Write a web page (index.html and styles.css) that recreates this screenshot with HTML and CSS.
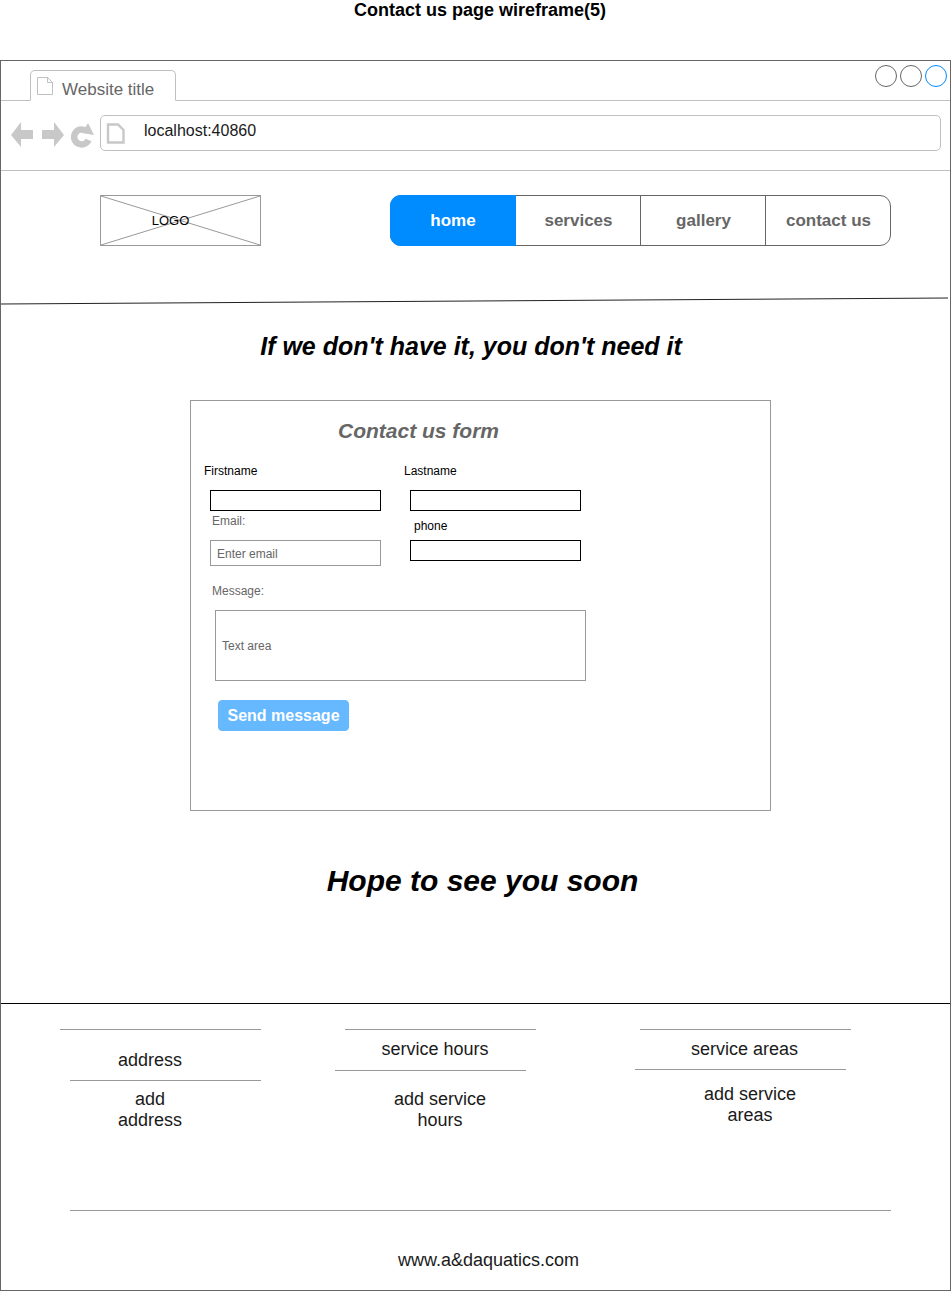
FILE: index.html
```html
<!DOCTYPE html>
<html lang="en">

<head>
    <meta charset="UTF-8">
    <meta name="viewport" content="width=device-width, initial-scale=1.0">
    <title>Contact us page wireframe(5)</title>
    <link rel="stylesheet" href="styles.css">
</head>
<body>
    <h1 class="page-title">Contact us page wireframe(5)</h1>

    <div class="frame">
        <div class="tab-strip">
            <div class="tab">
                <svg class="tab-icon" width="18" height="20" viewBox="0 0 18 20">
                    <path d="M1.5 1.5H11.5L16.5 6.5V18.5H1.5Z M11.5 1.5V6.5H16.5" fill="#fff" stroke="#c0c0c0"/>
                </svg>
                <span>Website title</span>
            </div>
            <div class="window-buttons">
                <span class="circle"></span>
                <span class="circle"></span>
                <span class="circle circle-blue"></span>
            </div>
        </div>

        <div class="address-row">
            <svg class="nav-icons" width="84" height="26" viewBox="0 0 84 26">
                <path d="M0 13L10 0V8H22V17H10V25Z" fill="#c8c8c8"/>
                <path d="M53 13L43 0V8H31V17H43V25Z" fill="#c8c8c8"/>
                <path d="M77.5 18A7.5 7.5 0 1 1 74.5 8.5" fill="none" stroke="#c8c8c8" stroke-width="6.5"/>
                <path d="M77 1L83 13L71 11Z" fill="#c8c8c8"/>
            </svg>
            <div class="address-box">
                <svg class="page-icon" width="19" height="22" viewBox="0 0 19 22">
                    <path d="M2 1.5H12L17.5 7V19.5H2Z" fill="#fff" stroke="#c8c8c8" stroke-width="2.4"/>
                </svg>
                <span>localhost:40860</span>
            </div>
        </div>

        <div class="site-header">
            <div class="logo">
                <svg class="logo-cross" width="159" height="49" viewBox="0 0 159 49" preserveAspectRatio="none">
                    <path d="M0 0L159 49M159 0L0 49" stroke="#999" fill="none"/>
                </svg>
                <span class="logo-text">LOGO</span>
            </div>
            <nav class="nav">
                <a class="nav-item nav-active">home</a>
                <a class="nav-item nav-services">services</a>
                <a class="nav-item">gallery</a>
                <a class="nav-item">contact us</a>
            </nav>
        </div>

        <svg class="slant" width="950" height="8" viewBox="0 0 950 8">
            <path d="M0 7L947 1" stroke="#222" fill="none"/>
        </svg>

        <h2 class="tagline">If we don't have it, you don't need it</h2>

        <div class="form-box">
            <h3 class="form-title">Contact us form</h3>

            <div class="name-labels">
                <label class="lbl lbl-first">Firstname</label>
                <label class="lbl lbl-last">Lastname</label>
            </div>

            <div class="fields">
                <div class="field-col">
                    <div class="input-black"></div>
                    <label class="lbl lbl-grey lbl-email">Email:</label>
                    <div class="input-grey">Enter email</div>
                </div>
                <div class="field-col">
                    <div class="input-black"></div>
                    <label class="lbl lbl-phone">phone</label>
                    <div class="input-black"></div>
                </div>
            </div>

            <label class="lbl lbl-grey lbl-message">Message:</label>
            <div class="text-area">Text area</div>
            <button class="send-btn">Send message</button>
        </div>

        <h2 class="closing">Hope to see you soon</h2>

        <footer class="footer">
            <div class="foot-cols">
                <div class="foot-col col-address">
                    <div class="rule rule-a"></div>
                    <p class="foot-head">address</p>
                    <div class="rule rule-b"></div>
                    <p class="foot-text">add<br>address</p>
                </div>
                <div class="foot-col col-hours">
                    <div class="rule rule-a"></div>
                    <p class="foot-head">service hours</p>
                    <div class="rule rule-b"></div>
                    <p class="foot-text">add service<br>hours</p>
                </div>
                <div class="foot-col col-areas">
                    <div class="rule rule-a"></div>
                    <p class="foot-head">service areas</p>
                    <div class="rule rule-b"></div>
                    <p class="foot-text">add service<br>areas</p>
                </div>
            </div>
            <div class="foot-line"></div>
            <p class="site-url">www.a&amp;daquatics.com</p>
        </footer>
    </div>
</body>

</html>
```

FILE: styles.css
```css
body {
    font-family: "Liberation Sans", Arial, sans-serif;
    background-color: #fff;
    margin: 0;
    padding: 0;
    color: #000;
}

.page-title {
    margin: 0;
    width: 960px;
    height: 60px;
    font-size: 18px;
    line-height: 20px;
    font-weight: bold;
    text-align: center;
}

.frame {
    position: relative;
    box-sizing: border-box;
    width: 951px;
    height: 1231px;
    border: 1px solid #666;
}

/* browser chrome */
.tab-strip {
    position: relative;
    box-sizing: border-box;
    height: 40px;
    padding: 9px 0 0 29px;
    border-bottom: 1px solid #c0c0c0;
}

.tab {
    box-sizing: border-box;
    display: flex;
    align-items: center;
    width: 146px;
    height: 31px;
    padding: 8px 0 0 5px;
    border: 1px solid #c0c0c0;
    border-bottom: 1px solid #fff;
    border-radius: 5px 5px 0 0;
    background-color: #fff;
    font-size: 17px;
    color: #666;
}

.tab-icon {
    margin-right: 8px;
    margin-top: -8px;
}

.window-buttons {
    position: absolute;
    top: 4px;
    right: 3px;
    display: flex;
    gap: 3px;
}

.circle {
    box-sizing: border-box;
    width: 22px;
    height: 22px;
    border: 1px solid #666;
    border-radius: 50%;
}

.circle-blue {
    border-color: #008cff;
}

.address-row {
    box-sizing: border-box;
    display: flex;
    height: 70px;
    padding: 14px 9px 0 10px;
    border-bottom: 1px solid #c0c0c0;
}

.nav-icons {
    margin-top: 7px;
    margin-right: 5px;
}

.address-box {
    box-sizing: border-box;
    display: flex;
    flex: 1;
    height: 36px;
    padding-left: 5px;
    border: 1px solid #c0c0c0;
    border-radius: 5px;
    font-size: 16px;
    line-height: 29px;
    color: #1a1a1a;
}

.page-icon {
    margin-top: 7px;
    margin-right: 19px;
}

/* site header */
.site-header {
    display: flex;
    height: 126px;
    padding: 24px 0 0 99px;
    box-sizing: border-box;
}

.logo {
    position: relative;
    box-sizing: border-box;
    width: 161px;
    height: 51px;
    padding-right: 20px;
    border: 1px solid #999;
    font-size: 13px;
    line-height: 49px;
    text-align: center;
}

.logo-cross {
    position: absolute;
    top: 0;
    left: 0;
}

.logo-text {
    position: relative;
}

.nav {
    box-sizing: border-box;
    display: flex;
    width: 501px;
    height: 51px;
    margin-left: 129px;
    border: 1px solid #666;
    border-radius: 11px;
}

.nav-item {
    box-sizing: border-box;
    width: 125px;
    padding-left: 1px;
    border-left: 1px solid #666;
    font-size: 17px;
    font-weight: bold;
    line-height: 49px;
    text-align: center;
    color: #666;
}

.nav-active {
    width: 126px;
    margin: -1px 0 -1px -1px;
    padding-left: 0;
    border-left: none;
    border-radius: 11px 0 0 11px;
    background-color: #008cff;
    line-height: 51px;
    color: #fff;
}

.nav-services {
    width: 124px;
    border-left: none;
}

.slant {
    position: absolute;
    top: 236px;
    left: 0;
}

.tagline {
    margin: 34px 0 0;
    width: 940px;
    font-size: 25px;
    line-height: 30px;
    font-style: italic;
    font-weight: bold;
    text-align: center;
}

/* contact form */
.form-box {
    box-sizing: border-box;
    width: 581px;
    height: 411px;
    margin: 39px 0 0 189px;
    padding-top: 18px;
    border: 1px solid #999;
    font-size: 12px;
}

.form-title {
    margin: 0 0 0 147px;
    font-size: 21px;
    line-height: 24px;
    font-style: italic;
    font-weight: bold;
    color: #666;
}

.lbl {
    display: block;
    font-size: 12px;
    line-height: 14px;
}

.lbl-grey {
    color: #666;
}

.name-labels {
    display: flex;
    margin-top: 21px;
    padding-left: 13px;
}

.lbl-first {
    width: 200px;
}

.fields {
    display: flex;
    gap: 29px;
    height: 77px;
    margin-top: 12px;
    padding-left: 19px;
}

.field-col {
    width: 171px;
}

.input-black {
    box-sizing: border-box;
    height: 21px;
    border: 1px solid #000;
}

.input-grey {
    box-sizing: border-box;
    height: 26px;
    padding-left: 6px;
    border: 1px solid #999;
    line-height: 26px;
    color: #666;
}

.lbl-email {
    height: 29px;
    padding: 3px 0 0 2px;
    box-sizing: border-box;
}

.lbl-phone {
    height: 29px;
    padding: 8px 0 0 4px;
    box-sizing: border-box;
}

.lbl-message {
    margin: 17px 0 0 21px;
}

.text-area {
    box-sizing: border-box;
    width: 371px;
    height: 71px;
    margin: 12px 0 0 24px;
    padding-left: 6px;
    border: 1px solid #999;
    line-height: 70px;
    color: #666;
}

.send-btn {
    display: block;
    width: 131px;
    height: 31px;
    margin: 19px 0 0 27px;
    padding: 0;
    border: 1px solid #66b8ff;
    border-radius: 4px;
    background-color: #66b8ff;
    font-family: "Liberation Sans", Arial, sans-serif;
    font-size: 16px;
    font-weight: bold;
    color: #fff;
}

.closing {
    margin: 50px 0 0;
    width: 963px;
    font-size: 30px;
    line-height: 40px;
    font-style: italic;
    font-weight: bold;
    text-align: center;
}

/* footer */
.footer {
    position: absolute;
    top: 942px;
    left: 0;
    width: 949px;
    border-top: 1px solid #000;
    color: #1a1a1a;
    font-size: 18px;
    line-height: 21px;
}

.foot-cols {
    position: relative;
    display: flex;
    height: 206px;
    padding-top: 25px;
    box-sizing: border-box;
}

.foot-col p {
    margin: 0;
    text-align: center;
}

.rule {
    height: 1px;
    background-color: #999;
}

.col-address {
    width: 201px;
    margin-left: 59px;
}

.col-address .foot-head {
    margin: 20px 21px 9px 0;
}

.col-address .rule-b {
    margin-left: 10px;
}

.col-address .foot-text {
    margin: 8px 21px 0 0;
}

.col-hours {
    width: 201px;
    margin-left: 74px;
}

.col-hours .rule-a {
    margin-left: 10px;
}

.col-hours .foot-head {
    margin: 9px 1px 10px 0;
}

.col-hours .rule-b {
    margin-right: 10px;
}

.col-hours .foot-text {
    margin: 18px 0 0 9px;
}

.col-areas {
    width: 216px;
    margin-left: 99px;
}

.col-areas .rule-a {
    margin-left: 5px;
}

.col-areas .foot-head {
    margin: 9px 0 9px 3px;
}

.col-areas .rule-b {
    margin-right: 5px;
}

.col-areas .foot-text {
    margin: 14px 0 0 14px;
}

.foot-line {
    height: 1px;
    width: 821px;
    margin-left: 69px;
    background-color: #999;
}

.site-url {
    margin: 39px 0 0;
    width: 975px;
    text-align: center;
}
```
